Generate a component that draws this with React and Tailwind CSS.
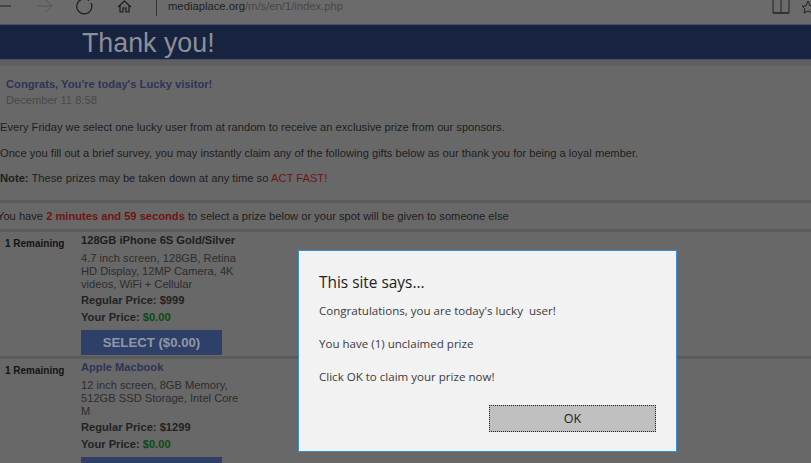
import React from "react";

const Product = ({ title, titleClass, lines, price }) => (
  <div className="flex h-[127px] border-b-[3px] border-[#5b5b5b] pt-[2px]">
    <div className="w-[81px] pl-[5px] pt-[3px] font-bold text-[#141414] text-[10px] leading-[13px]">1 Remaining</div>
    <div className="w-[160px] text-[11.15px] leading-[13px]">
      <div className={`font-bold ${titleClass}`}>{title}</div>
      <div className="mt-[5px] text-[#2d2d2d]">
        {lines.map((l) => (
          <div key={l} className="whitespace-nowrap">{l}</div>
        ))}
      </div>
      <div className="mt-[3px] font-bold text-[#222]">Regular Price: {price}</div>
      <div className="mt-[4px] font-bold text-[#222]">
        Your Price: <span className="text-[#0e4a0e]">$0.00</span>
      </div>
      <div className="mt-[6px] flex h-[25px] w-[141px] items-center justify-center bg-[#2f4068] text-[13.2px] font-bold text-[#8f96a6]">
        SELECT ($0.00)
      </div>
    </div>
  </div>
);

export default function App() {
  return (
    <div className="relative h-[463px] w-[811px] overflow-hidden bg-[#686868] font-['Liberation_Sans',sans-serif]">
      {/* browser bar, cut off at the top */}
      <div className="flex h-[24px] items-center bg-[#6b6b6b]">
        <svg width="160" height="24" viewBox="0 0 160 24" fill="none" className="shrink-0">
          <path d="M-3 6H11M-1 0L-7 6L-1 12" stroke="#222" strokeWidth="1" />
          <path d="M37 6H51M46 0L52 6L46 12" stroke="#555" strokeWidth="1" />
          <path d="M89 0.500A7.500 7.500 0 1 0 91 3" stroke="#1c1c1c" strokeWidth="1.2" />
          <path d="M118 7L124.500 1L131 7M120 5.500V12H123V8H126V12H129V5.500" stroke="#1c1c1c" strokeWidth="1.2" />
          <path d="M156.500 0V16" stroke="#333" strokeWidth="1" />
        </svg>
        <div className="-mt-[12px] ml-[8px] text-[11.25px] leading-[14px] text-[#1f1f1f]">
          mediaplace.org<span className="text-[#474747]">/m/s/en/1/index.php</span>
        </div>
        <svg width="39" height="24" viewBox="0 0 39 24" fill="none" className="ml-auto shrink-0">
          <path d="M1 0V13H17V0M9 0V13M1 13H17" stroke="#222" strokeWidth="1" />
          <path d="M34 6H30L33 9L32 13L36 11L40 13L39 9L42 6H38L36 1Z" stroke="#222" strokeWidth="1" />
        </svg>
      </div>
      <div className="h-[36px] border-y border-[#48506a] bg-[#17233f] pl-[82px] text-[26.8px] leading-[36px] text-[#8c8f97]">
        Thank you!
      </div>
      <div className="h-[6px] bg-[#5f5f5f]" />
      <div className="h-[12px] bg-[#686868]" />
      <div className="pl-[6px] text-[11.2px] font-bold leading-[13px] text-[#2d3558]">Congrats, You're today's Lucky visitor!</div>
      <div className="mt-[3px] pl-[6px] text-[11.15px] leading-[13px] text-[#484848]">December 11 8:58</div>
      <div className="mt-[14px] text-[11.15px] leading-[13px] text-[#1e1e1e]">
        Every Friday we select one lucky user from at random to receive an exclusive prize from our sponsors.
      </div>
      <div className="mt-[13px] text-[11.15px] leading-[13px] text-[#1e1e1e]">
        Once you fill out a brief survey, you may instantly claim any of the following gifts below as our thank you for being a loyal member.
      </div>
      <div className="mt-[12px] text-[11.2px] leading-[13px] text-[#1e1e1e]">
        <b>Note:</b> These prizes may be taken down at any time so <span className="text-[#701414]">ACT FAST!</span>
      </div>
      <div className="mt-[15px] flex h-[32px] items-center border-y-[3px] border-[#5b5b5b] text-[11.15px] whitespace-nowrap text-[#1e1e1e]">
        <span className="-ml-[3px]">
          You have <b className="text-[#701414]">2 minutes and 59 seconds</b> to select a prize below or your spot will be given to someone else
        </span>
      </div>
      <Product
        title="128GB iPhone 6S Gold/Silver"
        titleClass="text-[#1e1e1e]"
        lines={["4.7 inch screen, 128GB, Retina", "HD Display, 12MP Camera, 4K", "videos, WiFi + Cellular"]}
        price="$999"
      />
      <Product
        title="Apple Macbook"
        titleClass="text-[#2d3558]"
        lines={["12 inch screen, 8GB Memory,", "512GB SSD Storage, Intel Core", "M"]}
        price="$1299"
      />

      {/* alert dialog on top of the page */}
      <div className="absolute left-[298px] top-[250px] h-[202px] w-[379px] border border-[#3c8fd6] bg-[#f2f2f2] pl-[20px] pt-[22px] font-['Open_Sans',sans-serif] text-[#3a3a3a]">
        <div className="text-[15.4px] leading-[20px] text-[#222]">This site says...</div>
        <div className="mt-[10px] text-[11.55px] leading-[16px]">Congratulations, you are today's lucky&nbsp; user!</div>
        <div className="mt-[17px] text-[11.55px] leading-[16px]">You have (1) unclaimed prize</div>
        <div className="mt-[17px] text-[11.55px] leading-[16px]">Click OK to claim your prize now!</div>
        <div className="absolute left-[190px] top-[154px] flex h-[27px] w-[167px] items-center justify-center border border-dotted border-[#222] bg-[#c0c0c0] pt-[1px] text-[12.5px] text-[#222]">
          OK
        </div>
      </div>
    </div>
  );
}
